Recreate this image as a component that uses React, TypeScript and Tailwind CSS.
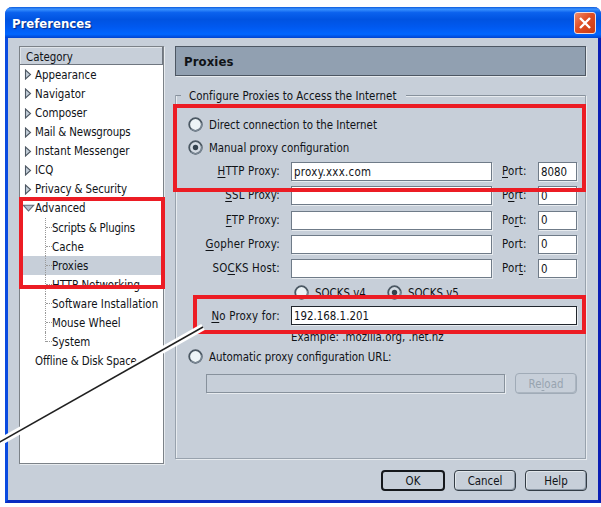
import type { ReactNode } from "react";

function Access({ text, at }: { text: string; at?: number }) {
  if (at === undefined) return <>{text}</>;
  return (
    <>
      {text.slice(0, at)}
      <span className="underline decoration-1 underline-offset-2 [text-decoration-skip-ink:none]">{text[at]}</span>
      {text.slice(at + 1)}
    </>
  );
}

function Radio({ checked = false }: { checked?: boolean }) {
  return (
    <svg className="block size-[15px] shrink-0" viewBox="0 0 15 15">
      <circle cx="7.5" cy="7.5" r="6.3" fill={checked ? "#d5dce4" : "#edf4f7"} stroke="#4b5863" strokeWidth="1.8" />
      <path d="M3 11.8A6.3 6.3 0 0 0 13.6 6" fill="none" stroke="#7b8895" strokeWidth="1.2" />
      {checked && <circle cx="7.5" cy="7.5" r="2.7" fill="#34424e" />}
    </svg>
  );
}

function Field({ className, children }: { className: string; children?: ReactNode }) {
  return (
    <div className={`flex shrink-0 items-center border border-[#6f7b88] bg-white pl-[2px] shadow-[1px_1px_0_#e7ebef] ${className}`}>
      {children}
    </div>
  );
}

function Category({ label, open = false, leaf = false, tracking = "" }: { label: string; open?: boolean; leaf?: boolean; tracking?: string }) {
  return (
    <div className="flex h-[19.07px] items-center">
      <div className="flex w-[15px] shrink-0 justify-center">
        {!leaf && !open && (
          <svg className="ml-[1px] block h-[11px] w-[8px]" viewBox="0 0 8 11">
            <path d="M1.5 1v9L6.5 5.5Z" fill="#c3ced9" stroke="#4f5964" strokeWidth="1.1" />
          </svg>
        )}
        {open && (
          <svg className="ml-[1px] block h-[8px] w-[13px] shrink-0" viewBox="0 0 13 8">
            <path d="M1.3 1.2h10.4L6.5 7Z" fill="#b4c0d0" stroke="#606a77" strokeWidth="1.1" />
          </svg>
        )}
      </div>
      <span className={tracking}>{label}</span>
    </div>
  );
}

function SubCategory({ label, selected = false, last = false, tracking = "" }: { label: string; selected?: boolean; last?: boolean; tracking?: string }) {
  return (
    <div className={`flex h-[19.07px] pl-[25px] ${selected ? "bg-[#c7cfd9]" : ""}`}>
      <div className={`w-[7px] shrink-0 border-l border-dotted border-[#9a9a9a] ${last ? "h-[10px]" : "h-full"}`}>
        <div className="h-[10px] border-b border-dotted border-[#9a9a9a]" />
      </div>
      <span className={`leading-[20px] ${tracking}`}>{label}</span>
    </div>
  );
}

function ProxyRow({ label, at, portAt, value, port }: { label: string; at: number; portAt?: number; value?: string; port: string }) {
  return (
    <div className="flex h-[24.3px] items-start">
      <div className="flex h-[18px] w-[104px] items-center justify-end">
        <span className="tracking-[0.22px]"><Access text={label} at={at} /></span>
      </div>
      <Field className="ml-[11px] h-[19px] w-[201px]">
        <span className="tracking-[0.3px]">{value}</span>
      </Field>
      <div className="ml-[10px] flex h-[18px] w-[36px] items-center">
        <span className="tracking-[0.2px]"><Access text="Port:" at={portAt} /></span>
      </div>
      <Field className="h-[19px] w-[39px]"><span>{port}</span></Field>
    </div>
  );
}

function Button({ children, className = "" }: { children: ReactNode; className?: string }) {
  return (
    <div className={`flex h-[21px] items-center justify-center rounded-[4px] border bg-[#c7cfd9] ${className}`}>{children}</div>
  );
}

export default function App() {
  return (
    <div className="relative h-[507px] w-[601px] overflow-hidden bg-white pl-[5px] pt-[7px] font-['DejaVu_Sans_Condensed','DejaVu_Sans',sans-serif] text-[11.4px] leading-[14px] whitespace-nowrap text-[#101317] [font-stretch:condensed]">
      <div className="flex h-[496px] w-[596px] flex-col rounded-t-[7px] border-x-[3px] border-b-[3px] border-r-[#0a1eb4] border-b-[#0a2cc0] border-l-[#0a4be0] bg-[#c7cfd9]">
        <header className="-mx-[3px] flex h-[31px] shrink-0 items-center justify-between rounded-t-[7px] bg-[linear-gradient(180deg,#0d5bdc_0%,#3a92ff_7%,#0b62ee_18%,#0053e1_40%,#0059f0_65%,#0066ff_88%,#0043cf_100%)] pl-[7px] pr-[5px]">
          <h1 className="pt-[3px] text-[13px] font-bold text-white [text-shadow:1px_1px_1px_#0a2a80]">Preferences</h1>
          <div className="mt-[1px] flex size-[22px] items-center justify-center rounded-[3px] border border-[#f3dcd8] bg-[linear-gradient(135deg,#f08a68,#df4d24_45%,#c83a12)]">
            <svg className="block size-[14px]" viewBox="0 0 14 14">
              <path d="M2 2l10 10M12 2L2 12" stroke="white" strokeWidth="2.4" />
            </svg>
          </div>
        </header>

        <main className="flex min-h-0 flex-1 pt-[8px] pl-[11px]">
          <aside className="h-[418px] w-[145px] shrink-0 border border-[#7c8288] bg-white shadow-[1px_1px_0_#e7ebef]">
            <div className="flex h-[18px] items-center border-r border-b border-[#6f7680] bg-[#c7cfd9] pl-[6px] pt-[2px] shadow-[inset_1px_1px_0_#dfe4e9]">Category</div>
            <div className="pt-[0.4px]">
              <Category label="Appearance" />
              <Category label="Navigator" />
              <Category label="Composer" />
              <Category label="Mail & Newsgroups" tracking="tracking-[-0.15px]" />
              <Category label="Instant Messenger" />
              <Category label="ICQ" />
              <Category label="Privacy & Security" tracking="tracking-[-0.1px]" />
              <Category label="Advanced" open />
              <SubCategory label="Scripts & Plugins" tracking="tracking-[-0.2px]" />
              <SubCategory label="Cache" />
              <SubCategory label="Proxies" selected />
              <SubCategory label="HTTP Networking" />
              <SubCategory label="Software Installation" tracking="tracking-[0.05px]" />
              <SubCategory label="Mouse Wheel" />
              <SubCategory label="System" last />
              <Category label="Offline & Disk Space" leaf tracking="tracking-[-0.15px]" />
            </div>
          </aside>

          <div className="ml-[11px] flex w-[412px] flex-col">
            <h2 className="flex h-[30px] w-[411px] shrink-0 items-center border border-[#4d5763] bg-[#91a0b1] pl-[8px] pt-[1px] text-[13px] font-bold tracking-[0.1px] shadow-[1px_1px_0_#e7ebef]">Proxies</h2>

            <section className="mt-[19px] flex h-[364px] w-[411px] shrink-0 flex-col border-x border-b border-[#98a2ad] shadow-[1px_1px_0_#e7ebef,inset_1px_0_0_#e7ebef]">
              <div className="-mt-[7px] flex h-[15px] items-center">
                <div className="h-px w-[5px] bg-[#87919c]" />
                <span className="ml-[8px] tracking-[0.06px]">Configure Proxies to Access the Internet</span>
                <div className="ml-auto h-px w-[179px] bg-[#87919c] shadow-[0_1px_0_#e7ebef]" />
              </div>
              <div className="mt-[14px] flex h-[15px] items-center gap-[6px] pl-[12px]">
                <Radio /><span>Direct connection to the Internet</span>
              </div>
              <div className="mt-[8px] mb-[7px] flex h-[15px] items-center gap-[6px] pl-[12px]">
                <Radio checked /><span>Manual proxy configuration</span>
              </div>
              <ProxyRow label="HTTP Proxy:" at={0} portAt={0} value="proxy.xxx.com" port="8080" />
              <ProxyRow label="SSL Proxy:" at={0} portAt={1} port="0" />
              <ProxyRow label="FTP Proxy:" at={0} portAt={2} port="0" />
              <ProxyRow label="Gopher Proxy:" at={0} port="0" />
              <ProxyRow label="SOCKS Host:" at={2} portAt={3} port="0" />
              <div className="mt-[2px] flex h-[15px] items-center gap-[6px] pl-[118px]">
                <Radio /><span className="w-[66px]">SOCKS v4</span>
                <Radio checked /><span>SOCKS v5</span>
              </div>
              <div className="mt-[6px] flex h-[19px] items-center">
                <div className="w-[104px] text-right tracking-[0.22px]"><Access text="No Proxy for:" at={0} /></div>
                <Field className="ml-[11px] h-[19px] w-[286px] !border-[#20262d]"><span>192.168.1.201</span></Field>
              </div>
              <div className="mt-[5px] h-[14px] pl-[115px]">Example: .mozilla.org, .net.nz</div>
              <div className="mt-[5px] flex h-[15px] items-center gap-[6px] pl-[12px]">
                <Radio /><span>Automatic proxy configuration URL:</span>
              </div>
              <div className="mt-[9px] flex items-center pl-[30px]">
                <Field className="h-[19px] w-[299px] !bg-[#c7cfd9] !border-[#87919c]" />
                <Button className="ml-[10px] w-[62px] border-[#a0abb7] text-[#98a4b0] shadow-[inset_-1px_-1px_0_#abb5c0]"><Access text="Reload" at={2} /></Button>
              </div>
            </section>

            <footer className="mt-[11px] flex justify-end gap-[9px]">
              <Button className="w-[64px] !border-2 border-[#15181c]">OK</Button>
              <Button className="w-[62px] border-[#333c45] shadow-[inset_1px_1px_0_#e2e7eb,inset_-1px_-1px_0_#8b97a4]">Cancel</Button>
              <Button className="w-[62px] border-[#333c45] shadow-[inset_1px_1px_0_#e2e7eb,inset_-1px_-1px_0_#8b97a4]">Help</Button>
            </footer>
          </div>
        </main>
      </div>

      <div className="absolute top-[104px] left-[173px] h-[88px] w-[413px] border-4 border-[#ec1c24]" />
      <div className="absolute top-[197px] left-[19px] h-[92px] w-[146px] border-4 border-[#ec1c24]" />
      <div className="absolute top-[295px] left-[193px] h-[39px] w-[393px] border-4 border-[#ec1c24]" />
      <svg className="absolute inset-0 size-full" viewBox="0 0 601 507">
        <path d="M-2 443L203 327" stroke="white" strokeWidth="7" />
        <path d="M-2 443L203 327" stroke="#202020" strokeWidth="1.5" />
      </svg>
    </div>
  );
}
